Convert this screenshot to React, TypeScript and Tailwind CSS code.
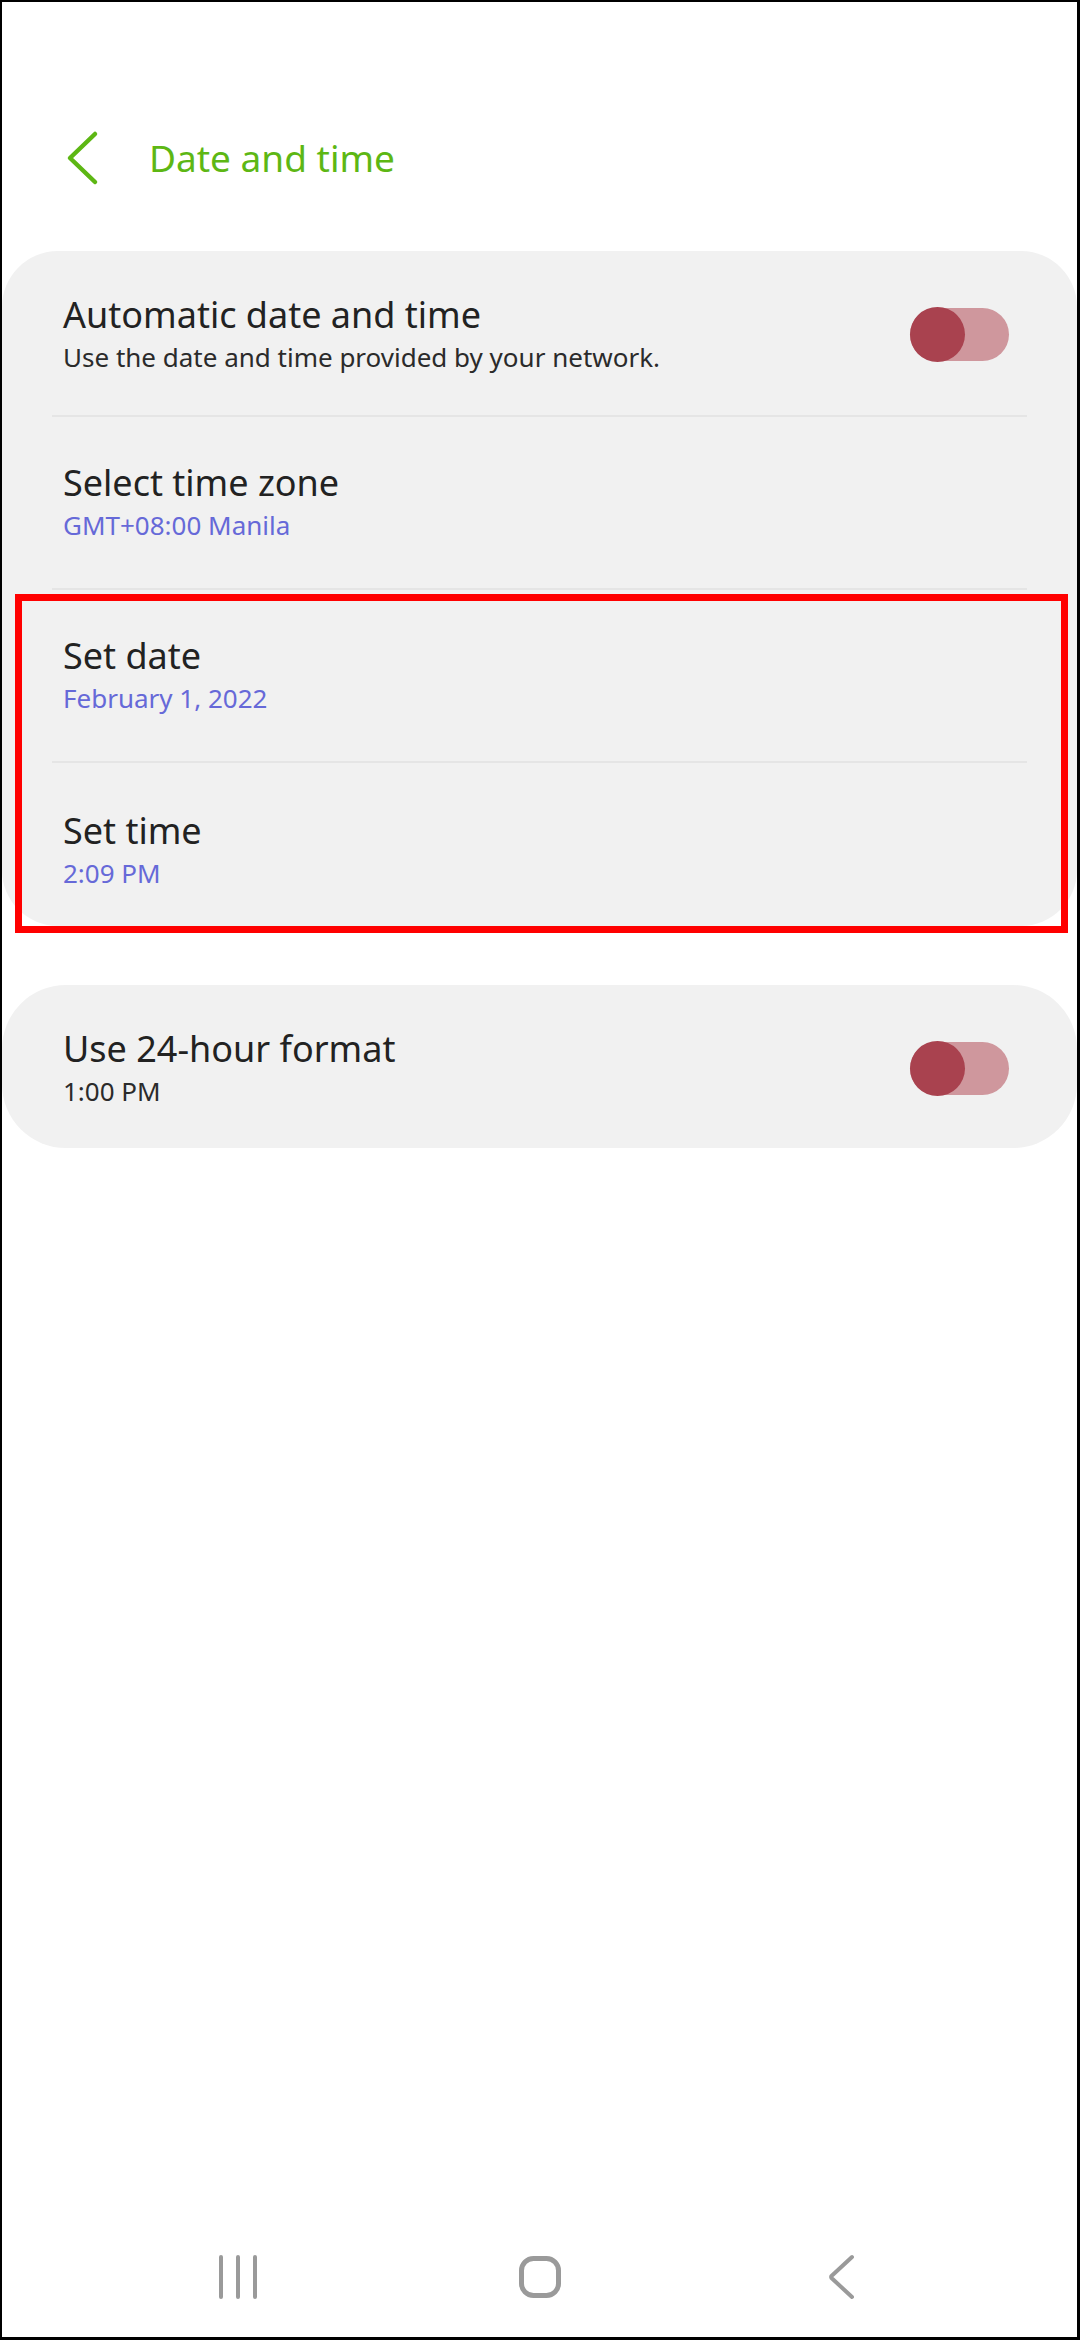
import React from "react";

function Toggle() {
  return (
    <div className="relative w-[99px] h-[55px] flex items-center">
      <div className="absolute left-0 right-0 h-[53px] rounded-full bg-[#cf979d]" />
      <div className="absolute left-0 w-[55px] h-[55px] rounded-full bg-[#a9424f]" />
    </div>
  );
}

function Divider() {
  return <div className="h-[2px] mx-[50px] bg-[#e5e5e5]" />;
}

type RowProps = {
  title: string;
  sub: string;
  subColor: string;
  pad: string;
  toggle?: boolean;
};

function Row({ title, sub, subColor, pad, toggle }: RowProps) {
  return (
    <div className={`flex items-center justify-between pl-[61px] pr-[68px] ${pad}`}>
      <div className="flex flex-col">
        <span className="text-[36px] leading-[46px] text-[#222222]">{title}</span>
        <span className={`text-[26px] leading-[38px] ${subColor}`}>{sub}</span>
      </div>
      {toggle && <Toggle />}
    </div>
  );
}

export default function App() {
  return (
    <div
      className="relative w-[1080px] h-[2340px] bg-white border-t-2 border-l-2 border-r-[3px] border-b-[3px] border-black flex flex-col"
      style={{ fontFamily: '"Noto Sans", "Open Sans", sans-serif' }}
    >
      {/* Header */}
      <div className="flex items-center h-[56px] mt-[128px] pl-[64px] gap-[49px]">
        <svg width="34" height="56" viewBox="0 0 34 56" fill="none">
          <path
            d="M29 4 L4 28 L29 52"
            stroke="#5db714"
            strokeWidth="4.5"
            strokeLinecap="round"
            strokeLinejoin="round"
          />
        </svg>
        <span className="text-[37px] leading-[56px] text-[#5db714]">Date and time</span>
      </div>

      {/* Main card */}
      <div className="mt-[65px] bg-[#f1f1f1] rounded-[56px] flex flex-col">
        <Row
          title="Automatic date and time"
          sub="Use the date and time provided by your network."
          subColor="text-[#2b2b2b]"
          pad="pt-[41px] pb-[39px]"
          toggle
        />
        <Divider />
        <Row
          title="Select time zone"
          sub="GMT+08:00 Manila"
          subColor="text-[#6669d8]"
          pad="pt-[43px] pb-[44px]"
        />
        <Divider />
        <Row
          title="Set date"
          sub="February 1, 2022"
          subColor="text-[#6669d8]"
          pad="pt-[43px] pb-[44px]"
        />
        <Divider />
        <Row
          title="Set time"
          sub="2:09 PM"
          subColor="text-[#6669d8]"
          pad="pt-[45px] pb-[34px]"
        />
      </div>

      {/* 24-hour card */}
      <div className="mt-[59px] bg-[#f1f1f1] rounded-[64px]">
        <Row
          title="Use 24-hour format"
          sub="1:00 PM"
          subColor="text-[#2b2b2b]"
          pad="pt-[41px] pb-[38px]"
          toggle
        />
      </div>

      {/* Nav bar */}
      <div className="mt-auto h-[120px] flex items-center justify-between ml-[206px] w-[664px]">
        <svg width="60" height="60" viewBox="0 0 60 60" fill="none">
          <path d="M13 10 V50 M30 10 V50 M47 10 V50" stroke="#9a9a9a" strokeWidth="4" strokeLinecap="round" />
        </svg>
        <svg width="60" height="60" viewBox="0 0 60 60" fill="none">
          <rect x="11.5" y="11.5" width="37" height="37" rx="12" stroke="#9a9a9a" strokeWidth="5" />
        </svg>
        <svg width="60" height="60" viewBox="0 0 60 60" fill="none">
          <path d="M40 10 L19.5 29 Q18.8 30 19.5 31 L40 50" stroke="#9a9a9a" strokeWidth="4" strokeLinecap="round" strokeLinejoin="round" />
        </svg>
      </div>

      {/* Red highlight annotation */}
      <div className="absolute left-[13px] top-[592px] w-[1053px] h-[339px] border-[7px] border-[#ff0000] pointer-events-none" />
    </div>
  );
}
